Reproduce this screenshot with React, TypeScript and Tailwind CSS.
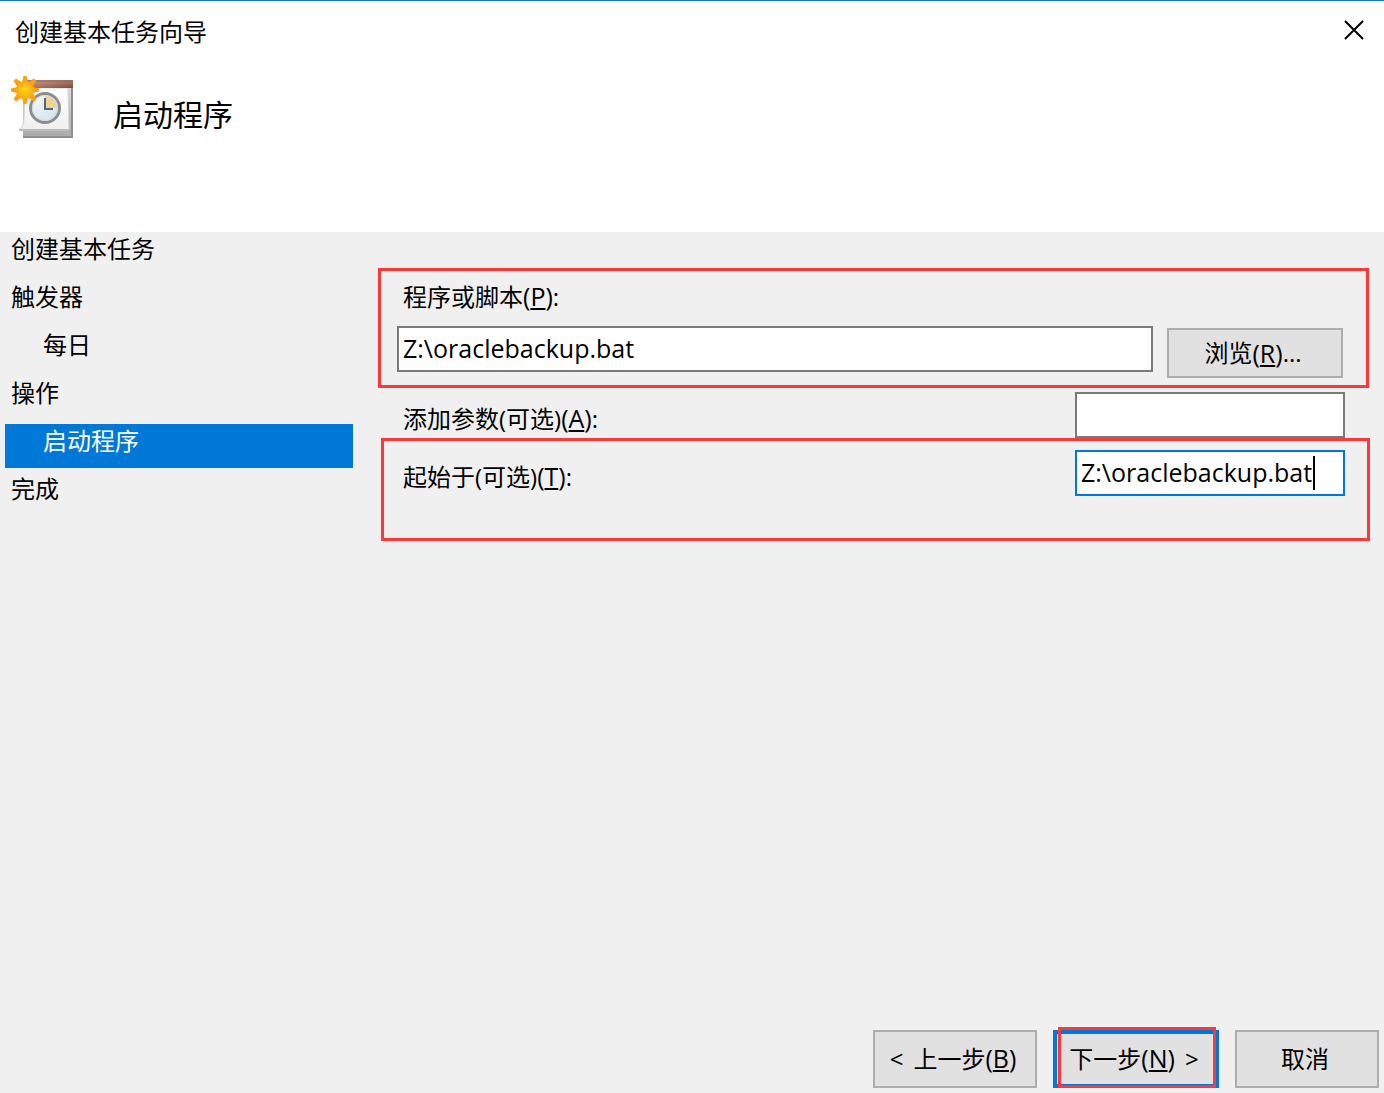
import React, { useState } from 'react';

interface Step {
  id: string;
  label: string;
  nested?: boolean;
}

const steps: Step[] = [
  { id: 'create', label: '创建基本任务' },
  { id: 'trigger', label: '触发器' },
  { id: 'daily', label: '每日', nested: true },
  { id: 'action', label: '操作' },
  { id: 'start-program', label: '启动程序', nested: true },
  { id: 'finish', label: '完成' },
];

const inputClass = 'h-[46px] border-2 bg-white px-1 pb-0.5 text-[25px] text-black outline-none rounded-none';
const buttonClass = 'flex items-center justify-center border-2 border-[#adadad] bg-[#e1e1e1]';

// Underlined access key in parentheses, e.g. (N)
const AccessKey: React.FC<{ letter: string }> = ({ letter }) => (
  <span className="text-[25px] leading-none">
    (<span className="underline decoration-2 underline-offset-2">{letter}</span>)
  </span>
);

const TaskIcon: React.FC = () => (
  <svg width="64" height="64" viewBox="0 0 64 64" aria-hidden="true">
    <defs>
      <linearGradient id="binding" x1="0" y1="0" x2="1" y2="1">
        <stop offset="0" stopColor="#c99d88" />
        <stop offset="0.5" stopColor="#ad7a64" />
        <stop offset="1" stopColor="#7d4b3b" />
      </linearGradient>
      <linearGradient id="sheet" x1="0" y1="0" x2="0" y2="1">
        <stop offset="0" stopColor="#ffffff" />
        <stop offset="1" stopColor="#efefef" />
      </linearGradient>
      <linearGradient id="back" x1="0" y1="0" x2="0" y2="1">
        <stop offset="0" stopColor="#dcdcdc" />
        <stop offset="1" stopColor="#a9a9a9" />
      </linearGradient>
      <linearGradient id="face" x1="0" y1="0" x2="1" y2="1">
        <stop offset="0" stopColor="#f8fbfd" />
        <stop offset="1" stopColor="#cfdde8" />
      </linearGradient>
      <radialGradient id="sun">
        <stop offset="0" stopColor="#ffd91c" />
        <stop offset="0.55" stopColor="#fdbd15" />
        <stop offset="1" stopColor="#fba512" />
      </radialGradient>
    </defs>
    <path d="M12 8H62V62H12Z" fill="url(#back)" />
    <path d="M12 61H62M61 10V62" stroke="#8f8f8f" strokeWidth="2" fill="none" />
    <path d="M14 12H57L58 54H8Q13 50 13 42Z" fill="url(#sheet)" stroke="#d4d4d4" />
    <path d="M8 54H58" stroke="#bcbcbc" strokeWidth="2" />
    <path d="M13 4H62V12H13Z" fill="url(#binding)" />
    <path d="M13 5H62" stroke="#8f6555" strokeWidth="1" />
    <circle cx="34" cy="32" r="14.500" fill="url(#face)" stroke="#8c8e90" strokeWidth="3" />
    <circle cx="34" cy="32" r="12.500" fill="none" stroke="#d2dbe1" />
    <path d="M34 32V20A12 12 0 0 1 46 32Z" fill="#f0d394" />
    <path d="M34 22V33H42" fill="none" stroke="#536979" strokeWidth="2" />
    <path
      d="M12.500 0H15.500L17 6.500L23 2.500L25.500 5L21.500 11L28 12.500V15.500L21.500 17L25.500 23L23 25.500L17 21.500L15.500 28H12.500L11 21.500L5 25.500L2.500 23L6.500 17L0 15.500V12.500L6.500 11L2.500 5L5 2.500L11 6.500Z"
      fill="#faa014"
    />
    <circle cx="14" cy="14" r="9" fill="url(#sun)" />
  </svg>
);

const App: React.FC = () => {
  const [program, setProgram] = useState('Z:\\oraclebackup.bat');
  const [args, setArgs] = useState('');
  const [startIn, setStartIn] = useState('Z:\\oraclebackup.bat');
  const current = 'start-program';

  return (
    <div className="min-h-screen flex flex-col bg-[#f0f0f0] text-black text-[24px] leading-[34px] font-['Open_Sans','Noto_Sans_CJK_SC',sans-serif]">
      {/* Title */}
      <header className="h-[232px] shrink-0 border-t border-[#1979ca] bg-white">
        <div className="flex items-center justify-between pt-2.5 pl-[15px] pr-5">
          <span className="pt-1">创建基本任务向导</span>
          <button type="button" aria-label="关闭">
            <svg width="20" height="20" viewBox="0 0 20 20" aria-hidden="true">
              <path d="M1 1L19 19M19 1L1 19" stroke="#000" strokeWidth="2" />
            </svg>
          </button>
        </div>
        <div className="flex items-center gap-[38px] mt-[27px] pl-[11px]">
          <TaskIcon />
          <h1 className="pt-3.5 text-[30px] leading-10">启动程序</h1>
        </div>
      </header>

      <div className="flex flex-1">
        {/* Steps */}
        <nav className="w-[353px] shrink-0 pl-[5px]">
          <ul className="flex flex-col gap-1">
            {steps.map((step) => (
              <li
                key={step.id}
                aria-current={step.id === current ? 'step' : undefined}
                className={`h-11 ${step.nested ? 'pl-[38px]' : 'pl-1.5'} ${
                  step.id === current ? 'bg-[#0078d7] text-white' : ''
                }`}
              >
                {step.label}
              </li>
            ))}
          </ul>
        </nav>

        {/* Form */}
        <main className="flex-1 min-w-0 pl-[25px] pt-9">
          <div className="mr-[15px] border-[3px] border-[#fc3838] pt-[9px] pb-[7px] pl-4 pr-[23px]">
            <label htmlFor="program" className="block pl-1.5">
              程序或脚本<AccessKey letter="P" />:
            </label>
            <div className="flex items-start gap-[14px] mt-3">
              <input
                id="program"
                type="text"
                value={program}
                onChange={(e) => setProgram(e.target.value)}
                className={`${inputClass} flex-1 min-w-0 border-[#7a7a7a]`}
              />
              <button type="button" className={`${buttonClass} w-[176px] h-[50px] mt-0.5 pr-1`}>
                浏览<AccessKey letter="R" />...
              </button>
            </div>
          </div>

          <div className="flex items-center justify-between mt-1 pl-[25px] pr-[39px]">
            <label htmlFor="args" className="pt-2">
              添加参数(可选)<AccessKey letter="A" />:
            </label>
            <input
              id="args"
              type="text"
              value={args}
              onChange={(e) => setArgs(e.target.value)}
              className={`${inputClass} w-[270px] border-[#7a7a7a]`}
            />
          </div>

          <div className="flex items-center justify-between ml-[3px] mr-[14px] border-[3px] border-[#fc3838] pt-[9px] pb-[42px] pl-[19px] pr-[22px]">
            <label htmlFor="start-in" className="pt-2">
              起始于(可选)<AccessKey letter="T" />:
            </label>
            <div className="relative">
              <input
                id="start-in"
                type="text"
                value={startIn}
                onChange={(e) => setStartIn(e.target.value)}
                className={`${inputClass} block w-[270px] border-[#0078d7] caret-transparent`}
              />
              <span className="absolute left-[238px] top-1.5 w-0.5 h-[34px] bg-black pointer-events-none" />
            </div>
          </div>
        </main>
      </div>

      {/* Buttons */}
      <footer className="flex justify-end gap-4 pr-[5px] pb-[5px]">
        <button type="button" className={`${buttonClass} gap-2.5 w-[164px] h-[58px] pr-1`}>
          <span>&lt;</span>
          <span>
            上一步<AccessKey letter="B" />
          </span>
        </button>
        <div className="relative">
          <button
            type="button"
            className="flex items-center justify-center gap-2.5 w-[166px] h-[58px] border-4 border-[#0078d7] bg-[#e1e1e1] pr-1"
          >
            <span>
              下一步<AccessKey letter="N" />
            </span>
            <span>&gt;</span>
          </button>
          <span className="absolute -top-[3px] bottom-0 left-[5px] right-[3px] border-[3px] border-[#fc3838] pointer-events-none" />
        </div>
        <button type="button" className={`${buttonClass} w-36 h-[58px] pr-1`}>
          取消
        </button>
      </footer>
    </div>
  );
};

export default App;
